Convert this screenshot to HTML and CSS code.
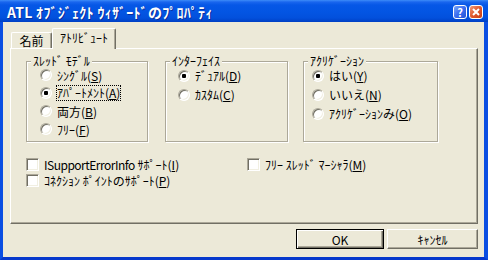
FILE: index.html
```html
<!DOCTYPE html>
<html lang="ja">
<head>
<meta charset="UTF-8"><meta name="viewport" content="width=device-width, initial-scale=1">
<title>ATL オブジェクト ウィザードのプロパティ</title>
<link rel="stylesheet" href="styles.css">
</head>
<body>
  <div class="titlebar">
    <span class="title">ATL ｵﾌﾞｼﾞｪｸﾄ ｳｨｻﾞｰﾄﾞのﾌﾟﾛﾊﾟﾃｨ</span>
    <div class="capbtns">
      <span class="capbtn help">?</span>
      <span class="capbtn close"><svg width="8" height="8" viewBox="0 0 8 8"><path d="M1 1L7 7M7 1L1 7" stroke="#fff" stroke-width="2"/></svg></span>
    </div>
  </div>

  <div class="frame">
    <div class="tabrow">
      <div class="tab">名前</div>
      <div class="tab active">ｱﾄﾘﾋﾞｭｰﾄ</div>
    </div>

    <div class="panel">
      <div class="groups">
        <fieldset class="group g1">
          <legend>ｽﾚｯﾄﾞ ﾓﾃﾞﾙ</legend>
          <div class="opts">
            <div class="opt"><span class="radio"></span><span>ｼﾝｸﾞﾙ(<u>S</u>)</span></div>
            <div class="opt"><span class="radio on"></span><span class="focus">ｱﾊﾟｰﾄﾒﾝﾄ(<u>A</u>)</span></div>
            <div class="opt"><span class="radio"></span><span>両方(<u>B</u>)</span></div>
            <div class="opt"><span class="radio"></span><span>ﾌﾘｰ(<u>F</u>)</span></div>
          </div>
        </fieldset>

        <fieldset class="group g2">
          <legend>ｲﾝﾀｰﾌｪｲｽ</legend>
          <div class="opts">
            <div class="opt"><span class="radio on"></span><span>ﾃﾞｭｱﾙ(<u>D</u>)</span></div>
            <div class="opt"><span class="radio"></span><span>ｶｽﾀﾑ(<u>C</u>)</span></div>
          </div>
        </fieldset>

        <fieldset class="group g3">
          <legend>ｱｸﾘｹﾞｰｼｮﾝ</legend>
          <div class="opts">
            <div class="opt"><span class="radio on"></span><span>はい(<u>Y</u>)</span></div>
            <div class="opt"><span class="radio"></span><span>いいえ(<u>N</u>)</span></div>
            <div class="opt"><span class="radio"></span><span>ｱｸﾘｹﾞｰｼｮﾝみ(<u>O</u>)</span></div>
          </div>
        </fieldset>
      </div>

      <div class="checks">
        <div class="check"><span class="box"></span><span><span class="latin">ISupportErrorInfo</span> ｻﾎﾟｰﾄ(<u>I</u>)</span></div>
        <div class="check"><span class="box"></span><span>ﾌﾘｰ ｽﾚｯﾄﾞ ﾏｰｼｬﾗ(<u>M</u>)</span></div>
        <div class="check"><span class="box"></span><span>ｺﾈｸｼｮﾝ ﾎﾟｲﾝﾄのｻﾎﾟｰﾄ(<u>P</u>)</span></div>
      </div>
    </div>

    <div class="buttons">
      <button class="btn default">OK</button>
      <button class="btn cancel">ｷｬﾝｾﾙ</button>
    </div>
  </div>
</body>
</html>
```

FILE: styles.css
```css
*{box-sizing:border-box}
body{margin:0;width:488px;height:260px;overflow:hidden;background:#ece9d8;font-family:"Noto Sans CJK JP",sans-serif;font-size:12px;color:#000}
u{text-decoration:underline;text-underline-offset:1px}

.titlebar{height:22px;padding:2px 5px 0 7px;display:flex;align-items:center;justify-content:space-between;
  background:linear-gradient(#3d8cf8 0,#1a66ee 2px,#0657e6 5px,#0355e3 12px,#0250dc 18px,#003fc4 22px)}
.title{color:#fff;font-weight:bold;font-size:14px;line-height:14px;letter-spacing:.3px;text-shadow:1px 1px 0 #0a2e9c;white-space:nowrap}
.capbtns{display:flex;gap:2px}
.capbtn{width:14px;height:14px;border:1px solid #fff;border-radius:3px;display:flex;align-items:center;justify-content:center;color:#fff;font-weight:bold;font-size:11px;line-height:11px}
.help{background:linear-gradient(135deg,#7aa5f8,#3a6ef0 50%,#2453d6)}
.close{background:linear-gradient(135deg,#f09a78,#e0582c 50%,#c73e16)}

.frame{height:238px;border-left:3px solid #0a4ee2;border-right:4px solid #0a4ee2;border-bottom:3px solid #0638cc;background:#ece9d8}

.tabrow{height:26px;padding-left:7px;display:flex;align-items:flex-end}
.tab{width:41px;height:16px;margin-left:1px;border:1px solid;border-color:#fff #716f64 transparent #fff;border-bottom:none;
  box-shadow:inset -1px 0 #aca899;border-radius:2px 2px 0 0;text-align:center;line-height:15px}
.tab.active{width:64px;height:21px;margin-left:0;margin-bottom:-1px;position:relative;z-index:1;background:#ece9d8;line-height:17px}

.panel{margin-left:7px;width:468px;height:176px;border:1px solid;border-color:#fff #716f64 #716f64 #fff;box-shadow:inset -1px -1px #aca899}

.groups{display:flex;margin-top:6px}
.group{margin:0;padding:0;height:87px;border:1px solid #aca899;box-shadow:inset 1px 1px #fff,1px 1px 0 #fff}
.group legend{margin-left:4px;padding:0 2px;line-height:12px;background:#ece9d8}
.g1{width:122px;margin-left:15px}
.g2{width:123px;margin-left:17px}
.g3{width:135px;margin-left:15px}
.opts{margin-top:-1px}
.g1 .opts{padding-left:13px}
.g2 .opts{padding-left:12px}
.g3 .opts{padding-left:8px}
.opt{height:18px;display:flex;align-items:center;white-space:nowrap}
.g2 .opt,.g3 .opt{height:19px}

.radio{flex:none;width:12px;height:12px;margin-right:5px;border-radius:50%;background:#fff;border:1px solid;border-color:#aca899 #fff #fff #aca899;
  box-shadow:inset 1px 1px #716f64,inset -1px -1px #f1efe2;display:flex;align-items:center;justify-content:center}
.radio.on::after{content:"";width:4px;height:4px;border-radius:1px;background:#000}
.focus{outline:1px dotted #000;line-height:14px}

.checks{display:grid;grid-template-columns:221px auto;margin:15px 0 0 15px}
.check{height:16px;display:flex;align-items:flex-start;white-space:nowrap;line-height:15px}
.latin{letter-spacing:-.5px}
.box{flex:none;width:13px;height:13px;margin:1px 5px 0 0;background:#fff;border:1px solid;border-color:#aca899 #fff #fff #aca899;
  box-shadow:inset 1px 1px #716f64,inset -1px -1px #f1efe2}

.buttons{display:flex;justify-content:flex-end;gap:3px;margin:5px 6px 0 0}
.btn{height:20px;padding:0;font-family:inherit;font-size:12px;color:#000;background:#ece9d8;border:1px solid;border-color:#fff #716f64 #716f64 #fff;box-shadow:inset -1px -1px #aca899}
.btn.default{width:88px;border-color:#000;box-shadow:inset 1px 1px #fff,inset -1px -1px #716f64,inset -2px -2px #aca899}
.btn.cancel{width:91px}
```
